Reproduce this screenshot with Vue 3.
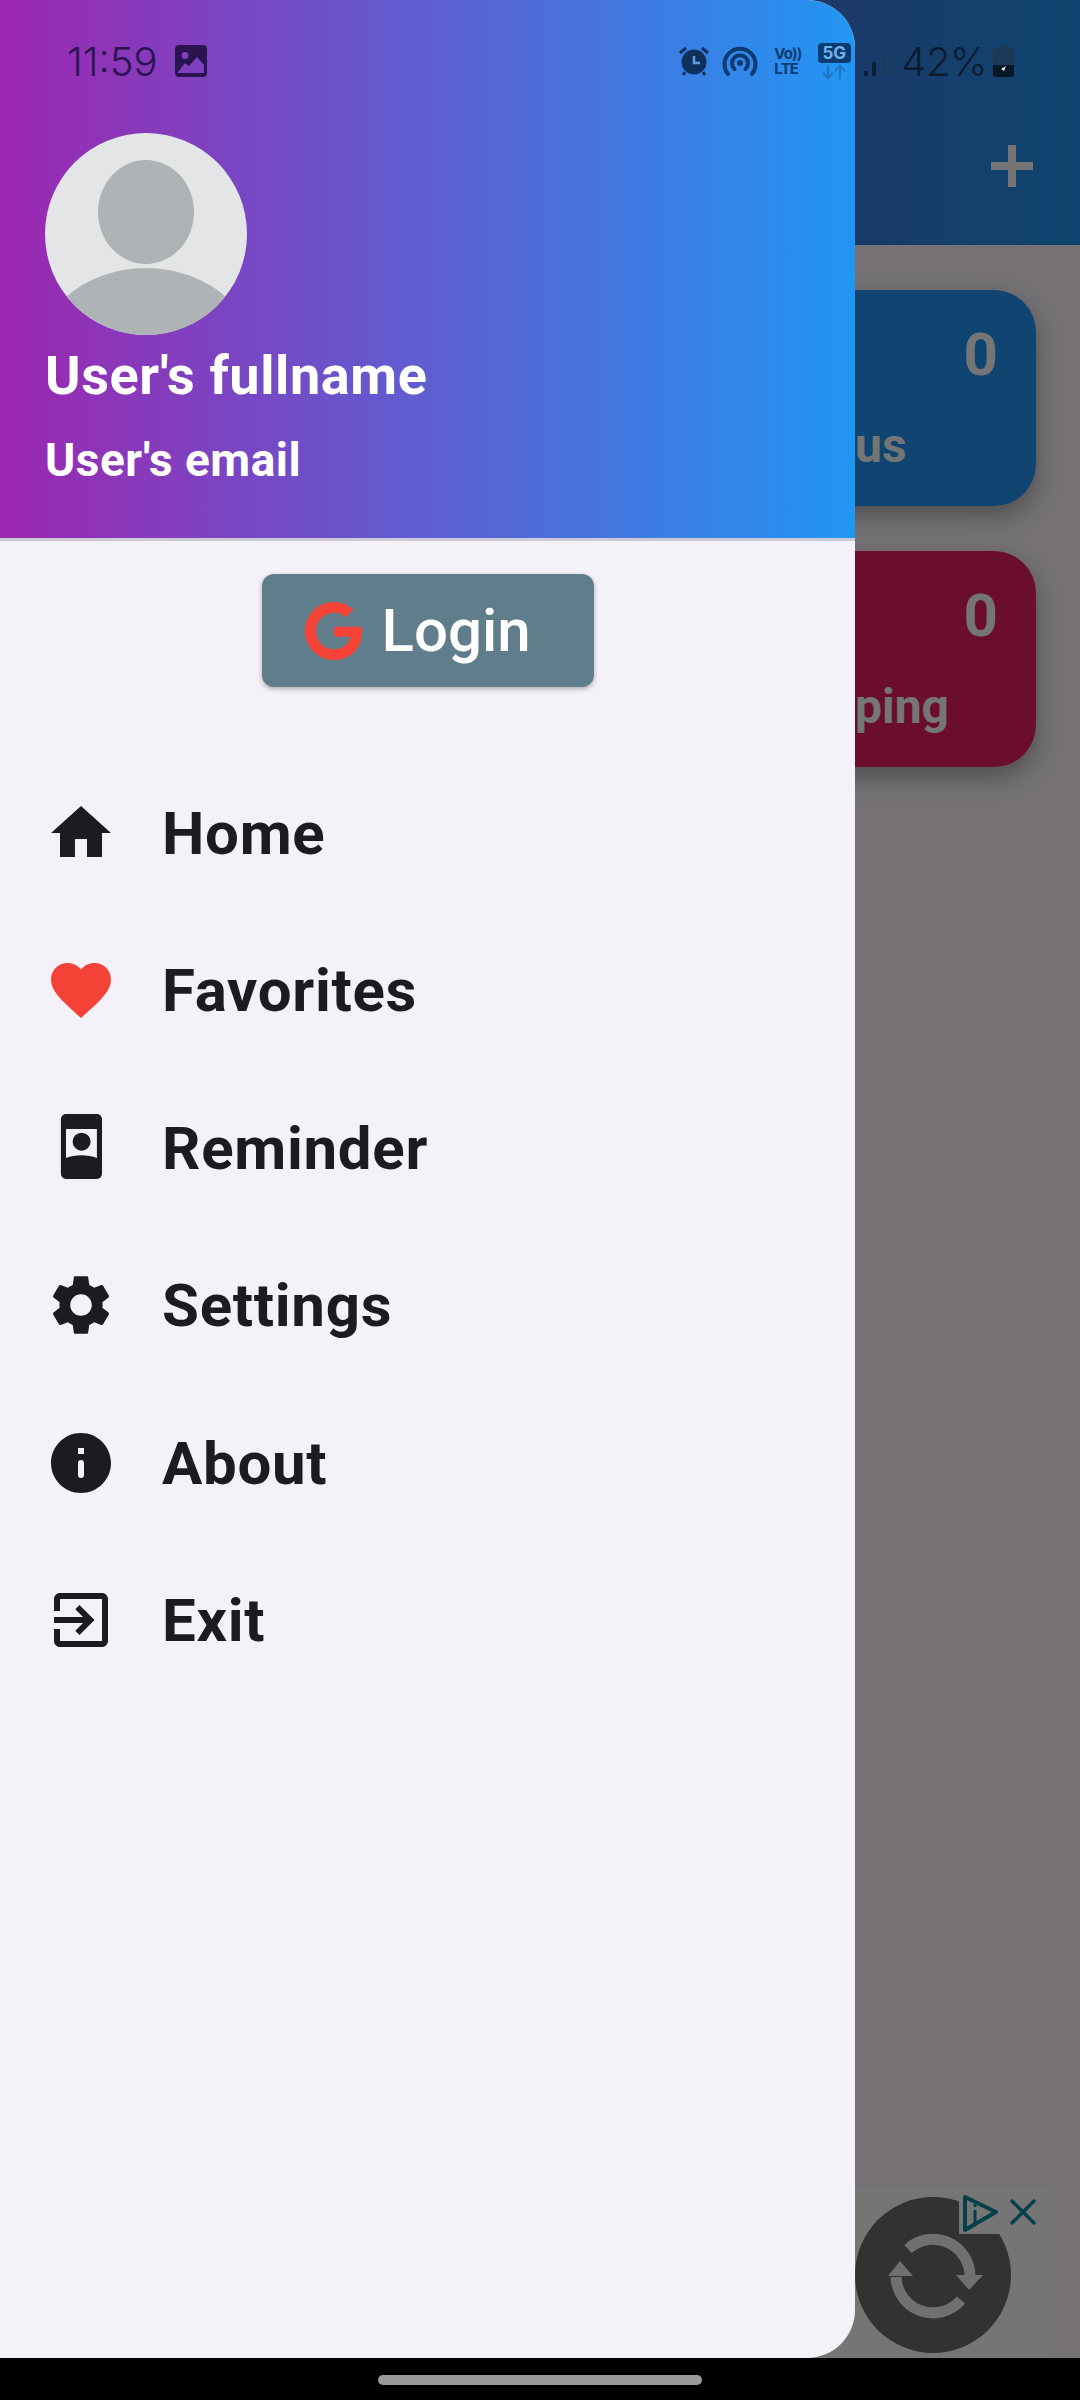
<script setup>
const items = [
  { label: 'Home', kind: 'home' },
  { label: 'Favorites', kind: 'heart' },
  { label: 'Reminder', kind: 'reminder' },
  { label: 'Settings', kind: 'settings' },
  { label: 'About', kind: 'info' },
  { label: 'Exit', kind: 'exit' },
]
const paths = {
  home: 'M10 20v-6h4v6h5v-8h3L12 3 2 12h3v8z',
  heart: 'M12 21.35l-1.45-1.32C5.4 15.36 2 12.28 2 8.5 2 5.42 4.42 3 7.5 3c1.74 0 3.41.81 4.5 2.09C13.09 3.81 14.76 3 16.5 3 19.58 3 22 5.42 22 8.5c0 3.78-3.4 6.86-8.55 11.54L12 21.35z',
  settings: 'M19.14 12.94c.04-.3.06-.61.06-.94 0-.32-.02-.64-.07-.94l2.03-1.58c.18-.14.23-.41.12-.61l-1.92-3.32c-.12-.22-.37-.29-.59-.22l-2.39.96c-.5-.38-1.03-.7-1.62-.94l-.36-2.54c-.04-.24-.24-.41-.48-.41h-3.84c-.24 0-.43.17-.47.41l-.36 2.54c-.59.24-1.13.57-1.62.94l-2.39-.96c-.22-.08-.47 0-.59.22L2.74 8.87c-.12.21-.08.47.12.61l2.03 1.58c-.05.3-.09.63-.09.94s.02.64.07.94l-2.03 1.58c-.18.14-.23.41-.12.61l1.92 3.32c.12.22.37.29.59.22l2.39-.96c.5.38 1.03.7 1.62.94l.36 2.54c.05.24.24.41.48.41h3.84c.24 0 .44-.17.47-.41l.36-2.54c.59-.24 1.13-.56 1.62-.94l2.39.96c.22.08.47 0 .59-.22l1.92-3.32c.12-.22.07-.47-.12-.61l-2.01-1.58zM12 15.6c-1.98 0-3.6-1.62-3.6-3.6s1.62-3.6 3.6-3.6 3.6 1.62 3.6 3.6-1.62 3.6-3.6 3.6z',
  info: 'M12 2C6.48 2 2 6.48 2 12s4.48 10 10 10 10-4.48 10-10S17.52 2 12 2zM11 7h2v2h-2zM11 12a1 1 0 0 1 2 0v4a1 1 0 0 1-2 0z',
  exit: 'M10.09 15.59L11.5 17l5-5-5-5-1.41 1.41L12.67 11H3v2h9.67l-2.58 2.59zM19 3H5c-1.11 0-2 .9-2 2v4h2V5h14v14H5v-4H3v4c0 1.1.89 2 2 2h14c1.1 0 2-.9 2-2V5c0-1.1-.9-2-2-2z',
  reminder: 'M7 .7h10.300A1.700 1.700 0 0 1 19 2.400v18.200a1.700 1.700 0 0 1-1.700 1.700H7a1.700 1.700 0 0 1-1.700-1.700V2.400A1.700 1.700 0 0 1 7 .7zM7 5.700v9.600c3-1.200 7.300-1.200 10.300 0V5.700zM12.200 6.900a3 3 0 1 1 0 6 3 3 0 0 1 0-6z',
}
</script>

<template>
  <div class="screen">
    <div class="app">
      <header class="appbar">
        <svg class="plus" viewBox="0 0 42 42"><path d="M17 0h8v17h17v8H25v17h-8V25H0v-8h17z" fill="#fff" /></svg>
      </header>
      <div class="cards">
        <div class="card blue">
          <div class="count">0</div>
          <div class="label">us</div>
        </div>
        <div class="card pink">
          <div class="count">0</div>
          <div class="label">ping</div>
        </div>
      </div>
      <div class="spacer"></div>
      <div class="ad">
        <div class="ad-circle">
          <svg viewBox="0 0 156 156" class="ad-sync">
            <g fill="none" stroke="#f4f4f4" stroke-width="11">
              <path d="M53 52a37 37 0 0 1 62 27" />
              <path d="M106 103a37 37 0 0 1-65-23" />
            </g>
            <path d="M101 78h27l-14 15z" fill="#f4f4f4" />
            <path d="M33 79h25L45 64z" fill="#f4f4f4" />
          </svg>
        </div>
        <div class="ad-tag">
          <svg viewBox="0 0 86 40" class="ad-icons">
            <path d="M3 3v33L34 18z" fill="none" stroke="#0f8ea0" stroke-width="4" stroke-linejoin="round" />
            <path d="M13 16v13M13 10v3" stroke="#0f8ea0" stroke-width="3" />
            <path d="M49 6l24 24M73 6L49 30" stroke="#0f8ea0" stroke-width="3.500" />
          </svg>
        </div>
      </div>
    </div>
    <div class="scrim"></div>

    <aside class="drawer">
      <div class="drawer-head">
        <svg class="avatar" viewBox="0 0 202 202">
          <defs>
            <clipPath id="avatar-clip"><circle cx="101" cy="101" r="101" /></clipPath>
          </defs>
          <circle cx="101" cy="101" r="101" fill="#e3e5e7" />
          <g clip-path="url(#avatar-clip)" fill="#aeb3b5">
            <ellipse cx="101" cy="79" rx="48" ry="52" />
            <ellipse cx="101" cy="237" rx="115" ry="102" />
          </g>
        </svg>
        <div class="name">User's fullname</div>
        <div class="email">User's email</div>
      </div>
      <div class="login-wrap">
        <button class="login">
          <svg class="g" viewBox="0 0 488 512"><path fill="#f44336" d="M488 261.800C488 403.300 391.100 504 248 504 110.800 504 0 393.200 0 256S110.800 8 248 8c66.800 0 123 24.500 166.300 64.900l-67.500 64.900C258.500 52.600 94.300 116.600 94.300 256c0 86.500 69.100 156.600 153.700 156.600 98.200 0 135-70.400 140.800-106.900H248v-85.300h236.100c2.300 12.700 3.900 24.900 3.900 41.400z" /></svg>
          <span>Login</span>
        </button>
      </div>
      <nav class="menu">
        <div v-for="it in items" :key="it.label" class="row">
          <svg class="icon" viewBox="0 0 24 24"><path :d="paths[it.kind]" :fill="it.kind === 'heart' ? '#f44336' : '#1d1b1f'" fill-rule="evenodd" /></svg>
          <span class="row-label">{{ it.label }}</span>
        </div>
      </nav>
    </aside>

    <div class="status">
      <span class="time">11:59</span>
      <svg class="st-img" viewBox="0 0 32 32">
        <path fill-rule="evenodd" fill="#2a1450" d="M4 0h24a4 4 0 0 1 4 4v24a4 4 0 0 1-4 4H4a4 4 0 0 1-4-4V4a4 4 0 0 1 4-4zM3 27v1h26v-8l-7-8-8 9-4-3zM10 7a3.500 3.500 0 1 0 0 7 3.500 3.500 0 0 0 0-7z" />
      </svg>
      <div class="st-gap"></div>
      <svg class="st-alarm" viewBox="0 0 30 30">
        <circle cx="15" cy="16" r="12.500" fill="#10305c" />
        <path d="M15 10v7h6" fill="none" stroke="#5d9de8" stroke-width="2.500" />
        <path d="M1 7l6-5M29 7l-6-5M6 26l-2 3M24 26l2 3" stroke="#10305c" stroke-width="3" />
      </svg>
      <svg class="st-hot" viewBox="0 0 36 30">
        <g fill="none" stroke="#0e3a72" stroke-width="4" stroke-linecap="round">
          <path d="M6 28A15.500 15.500 0 1 1 30 28" />
          <path d="M12.500 23a8 8 0 1 1 11 0" />
        </g>
        <circle cx="18" cy="17" r="3" fill="#0e3a72" />
      </svg>
      <div class="st-volte"><span>Vo))</span><span>LTE</span></div>
      <div class="st-5g">
        <span class="five">5G</span>
        <svg viewBox="0 0 24 14" class="arrows"><path d="M6 0v12M1 8l5 5 5-5M18 14V2M13 6l5-5 5 5" fill="none" stroke-width="2" stroke="#1f76c0" /></svg>
      </div>
      <svg class="st-sig" viewBox="0 0 28 30">
        <rect x="1" y="25" width="4" height="5" fill="#0b2036" />
        <rect x="9" y="16" width="4" height="14" fill="#0b2036" />
        <rect x="17" y="8" width="3" height="22" fill="#1d3e5f" />
        <rect x="24" y="0" width="3" height="30" fill="#1d3e5f" />
      </svg>
      <span class="pct">42%</span>
      <svg class="st-bat" viewBox="0 0 21 32">
        <path d="M7 0h7v3h4a3 3 0 0 1 3 3v23a3 3 0 0 1-3 3H3a3 3 0 0 1-3-3V6a3 3 0 0 1 3-3h4z" fill="#1c3a56" />
        <path d="M0 20h21v9a3 3 0 0 1-3 3H3a3 3 0 0 1-3-3z" fill="#061726" />
        <path d="M8 24l5-3-2 5z" fill="#e8e8e8" />
      </svg>
    </div>

    <div class="navbar"><div class="pill"></div></div>
  </div>
</template>

<style>
html, body { margin: 0; padding: 0; }
</style>

<style scoped>
* { box-sizing: border-box; }
.screen {
  position: relative;
  width: 1080px;
  height: 2400px;
  overflow: hidden;
  font-family: Roboto, "Liberation Sans", sans-serif;
  background: #000;
}
.app {
  height: 2358px;
  background: #fef7ff;
  display: flex;
  flex-direction: column;
}
.appbar {
  height: 245px;
  background: linear-gradient(90deg, #9c27b0, #2196f3);
  display: flex;
  justify-content: flex-end;
  align-items: flex-end;
  padding: 0 47px 58px 0;
}
.plus { width: 42px; height: 42px; }
.cards {
  padding: 45px 44px 0;
  display: flex;
  flex-direction: column;
  gap: 45px;
}
.card {
  height: 216px;
  border-radius: 42px;
  color: #fff;
  box-shadow: 0 10px 24px rgba(0, 0, 0, 0.32);
  padding: 30px 38px 0 811px;
  font-weight: 700;
}
.blue { background: #2196f3; }
.pink { background: #e91e63; }
.count { font-size: 60px; line-height: 70px; text-align: right; }
.label { font-size: 48px; line-height: 56px; margin-top: 28px; }
.spacer { flex: 1; }
.ad {
  height: 170px;
  margin-right: 32px;
  background: #fff;
  position: relative;
}
.ad-circle {
  position: absolute;
  left: 855px;
  top: 9px;
  width: 156px;
  height: 156px;
  border-radius: 50%;
  background: #6e6e6e;
}
.ad-sync { width: 156px; height: 156px; display: block; }
.ad-tag {
  position: absolute;
  right: 0;
  top: 0;
  width: 89px;
  height: 46px;
  background: #fff;
  padding: 6px 0 0 3px;
}
.ad-icons { width: 86px; height: 40px; display: block; }
.scrim {
  position: absolute;
  left: 0;
  top: 0;
  width: 1080px;
  height: 2358px;
  background: rgba(0, 0, 0, 0.54);
}
.drawer {
  position: absolute;
  left: 0;
  top: 0;
  width: 855px;
  height: 2358px;
  background: #f4f2f8;
  border-radius: 0 48px 48px 0;
  overflow: hidden;
}
.drawer-head {
  height: 541px;
  border-bottom: 3px solid #cbc9d8;
  background: linear-gradient(90deg, #9c27b0, #2196f3);
  padding: 133px 0 0 45px;
  color: #fff;
}
.avatar { width: 202px; height: 202px; display: block; }
.name { font-size: 54px; font-weight: 700; line-height: 60px; margin-top: 11px; letter-spacing: 0.6px; }
.email { font-size: 46px; font-weight: 700; line-height: 54px; margin-top: 27px; letter-spacing: 0.5px; }
.login-wrap { display: flex; justify-content: center; padding-top: 33px; }
.login {
  width: 332px;
  height: 113px;
  border: 0;
  border-radius: 12px;
  background: #607d8b;
  box-shadow: 0 2px 5px rgba(0, 0, 0, 0.3);
  display: flex;
  align-items: center;
  padding: 0 0 0 43px;
  color: #fff;
  font-family: inherit;
  font-size: 60px;
  font-weight: 500;
  gap: 20px;
}
.g { width: 57px; height: 60px; }
.menu { padding-top: 67px; }
.row {
  height: 157.500px;
  display: flex;
  align-items: center;
  padding-left: 45px;
  gap: 45px;
}
.icon { width: 72px; height: 72px; }
.row-label { font-size: 60px; font-weight: 700; color: #1d1b1f; line-height: 70px; letter-spacing: 0.7px; position: relative; top: 1px; }
.status {
  position: absolute;
  left: 0;
  top: 0;
  width: 1080px;
  height: 124px;
  display: flex;
  align-items: center;
  padding: 0 0 2px 67px;
  font-family: Inter, "Liberation Sans", sans-serif;
}
.time { font-size: 40px; font-weight: 300; color: #2a1450; width: 108px; }
.st-img { width: 32px; height: 32px; }
.st-gap { flex: 1; }
.st-alarm { width: 30px; height: 30px; }
.st-hot { width: 36px; height: 30px; margin-left: 13px; }
.st-volte {
  margin-left: 16px;
  width: 32px;
  display: flex;
  flex-direction: column;
  font-size: 15px;
  line-height: 15px;
  font-weight: 700;
  letter-spacing: -0.8px;
  color: #0e3a72;
}
.st-5g { margin-left: 11px; width: 34px; display: flex; flex-direction: column; align-items: center; }
.five {
  width: 33px;
  height: 20px;
  background: #0a3c70;
  border-radius: 4px;
  color: #6fb3ee;
  font-size: 17px;
  font-weight: 700;
  line-height: 20px;
  text-align: center;
}
.arrows { width: 24px; height: 14px; margin-top: 2px; }
.st-sig { width: 28px; height: 30px; margin-left: 12px; }
.pct { font-size: 40px; font-weight: 300; color: #0a1c30; margin-left: 10px; letter-spacing: -0.5px; }
.st-bat { width: 21px; height: 32px; margin-left: 6px; margin-right: 66px; }
.navbar { position: absolute; left: 0; bottom: 0; width: 1080px; height: 42px; display: flex; justify-content: center; padding-top: 17px; }
.pill { width: 324px; height: 10px; border-radius: 5px; background: #9a9a9a; }
</style>
